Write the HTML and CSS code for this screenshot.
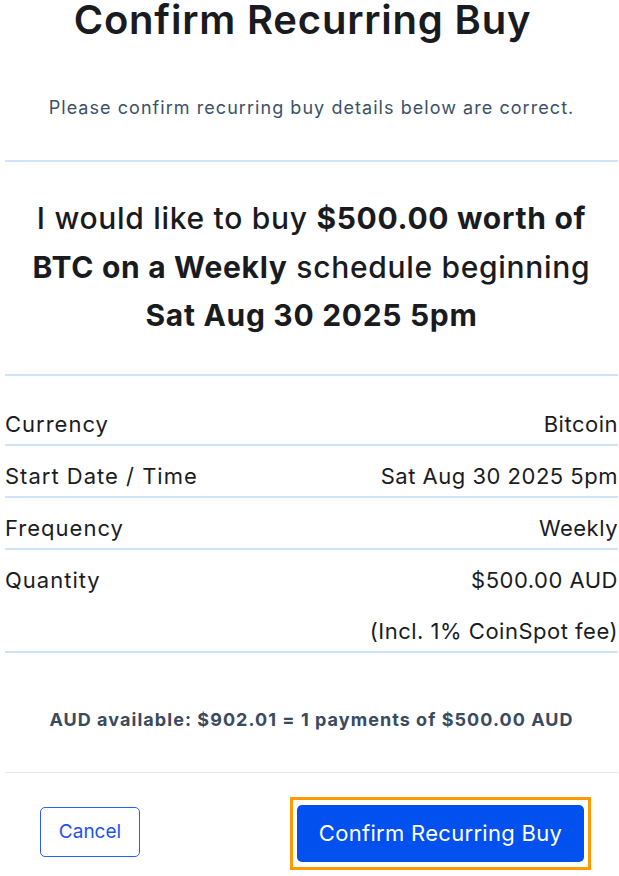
FILE: index.html
```html
<!DOCTYPE html>
<html lang="en">
<head>
<meta charset="utf-8">
<title>Confirm Recurring Buy</title>
<link rel="stylesheet" href="styles.css">
</head>
<body>
<div class="modal">
  <h1 class="title">Confirm Recurring Buy</h1>
  <p class="subtitle">Please confirm recurring buy details below are correct.</p>
  <div class="sep-blue"></div>
  <p class="statement">I would like to buy <strong>$500.00 worth of</strong><br><strong>BTC on a Weekly</strong> schedule beginning<br><strong>Sat Aug 30 2025 5pm</strong></p>
  <div class="sep-blue sep-after-statement"></div>
  <div class="rows">
    <div class="row"><span class="label">Currency</span><span class="value">Bitcoin</span></div>
    <div class="row"><span class="label">Start Date / Time</span><span class="value">Sat Aug 30 2025 5pm</span></div>
    <div class="row"><span class="label">Frequency</span><span class="value">Weekly</span></div>
    <div class="row"><span class="label">Quantity</span><span class="value-stack"><span class="value">$500.00 AUD</span><span class="value fee">(Incl. 1% CoinSpot fee)</span></span></div>
  </div>
  <p class="available">AUD available: $902.01 = 1 payments of $500.00 AUD</p>
  <div class="sep-gray"></div>
  <div class="footer">
    <button class="btn-cancel" type="button">Cancel</button>
    <span class="focus-ring"><button class="btn-confirm" type="button">Confirm Recurring Buy</button></span>
  </div>
</div>
</body>
</html>
```

FILE: styles.css
```css
* { box-sizing: border-box; }
html, body { margin: 0; padding: 0; background: #ffffff; }
body {
  font-family: Inter, "Noto Sans", "Liberation Sans", sans-serif;
  color: #1b1c1f;
  overflow: hidden;
}
.modal {
  width: 619px;
  padding: 0 1px 0 5px;
}
.title {
  margin: -4px 0 0;
  padding-right: 18px;
  font-size: 40px;
  line-height: 48px;
  font-weight: 600;
  text-align: center;
  color: #1a1b1e;
  letter-spacing: 0.8px;
}
.subtitle {
  margin: 52px 0 0;
  font-size: 18px;
  line-height: 24px;
  text-align: center;
  color: #3c5169;
  letter-spacing: 1.05px;
}
.sep-blue {
  height: 2px;
  background: #cfe4f7;
  margin-top: 40px;
}
.statement {
  margin: 32px 0 0;
  font-size: 30px;
  line-height: 48.5px;
  font-weight: 500;
  text-align: center;
  color: #1a1b1e;
  letter-spacing: 0.7px;
  white-space: nowrap;
}
.statement strong { font-weight: 700; }
.sep-after-statement { margin-top: 34px; }
.rows { margin-top: 18px; }
.row {
  display: flex;
  justify-content: space-between;
  align-items: flex-start;
  padding: 18px 0 8px;
  border-bottom: 2px solid #cfe4f7;
  font-size: 22px;
  line-height: 24px;
  color: #1b1c1f;
  letter-spacing: 0.5px;
}
.label { letter-spacing: 1px; }
.value-stack {
  display: flex;
  flex-direction: column;
  align-items: flex-end;
}
.fee { margin-top: 27px; }
.available {
  margin: 55px 0 0;
  font-size: 18px;
  line-height: 24px;
  font-weight: 700;
  text-align: center;
  color: #3a4a5f;
  letter-spacing: 1.05px;
}
.sep-gray {
  height: 1px;
  background: #e3e5e8;
  margin-top: 40px;
}
.footer {
  display: flex;
  justify-content: space-between;
  align-items: flex-start;
  padding: 0 27px 0 35px;
  margin-top: 24px;
}
.btn-cancel {
  width: 100px;
  height: 50px;
  margin-top: 10px;
  border: 1px solid #2a5cf6;
  border-radius: 5px;
  background: #ffffff;
  color: #1c52f2;
  font-family: inherit;
  font-size: 19px;
  font-weight: 400;
}
.focus-ring {
  display: block;
  border: 3px solid #ff9a00;
  padding: 5px 4px;
}
.btn-confirm {
  display: block;
  width: 287px;
  height: 57px;
  border: none;
  border-radius: 5px;
  background: #0251ef;
  color: #ffffff;
  font-family: inherit;
  font-size: 22px;
  font-weight: 400;
  letter-spacing: 0.3px;
}
```
